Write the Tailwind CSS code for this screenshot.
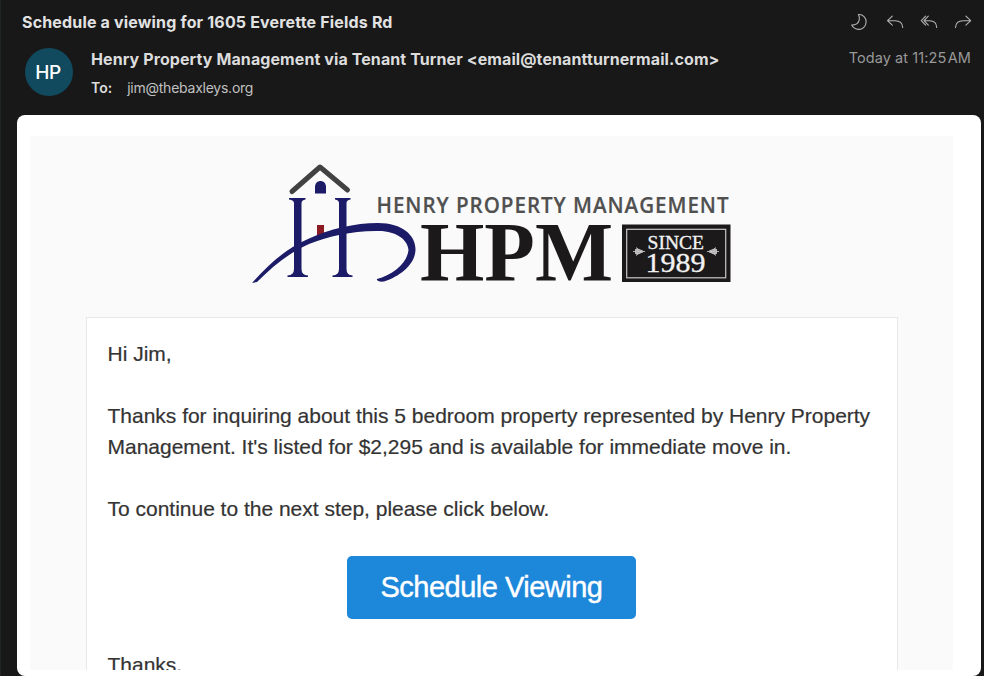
<!DOCTYPE html>
<html lang="en">
<head>
<meta charset="utf-8">
<title>Schedule a viewing for 1605 Everette Fields Rd</title>
<script src="https://cdn.jsdelivr.net/npm/@tailwindcss/browser@4"></script>
</head>
<body class="h-[676px] w-[984px] overflow-hidden bg-[#181818] font-['Inter',sans-serif]">
<div class="flex h-full flex-col border-l border-[#202527] pl-4 pr-[3px]">
  <header class="flex h-[115px] shrink-0 flex-col pl-[5px] pr-[10px]">
    <div class="flex h-[44px] items-center justify-between">
      <h1 class="whitespace-nowrap text-[16px] leading-5 font-bold tracking-[0.17px] text-[#e2e2e2]">Schedule a viewing for 1605 Everette Fields Rd</h1>
      <div class="-mr-px flex items-center gap-[16px] text-[#b4b4b4]">
        <svg class="-ml-px mr-px h-[18px] w-[18px]" viewBox="0 0 18 18" fill="none" stroke="currentColor" stroke-width="1.1" stroke-linejoin="round"><path d="M7.400 1.600C12 1.100 15.300 4.800 15.100 9C15 13.400 11.600 16.500 7.600 16.400C4.600 16.300 2.100 14.700 0.700 12.100C4.800 12 7.400 10.100 8.100 7.300C8.600 5.300 8.300 3.300 7.400 1.600Z"/></svg>
        <svg class="h-[18px] w-[18px]" viewBox="0 0 18 18" fill="none" stroke="currentColor" stroke-width="1.1" stroke-linecap="round" stroke-linejoin="round"><path d="M6.300 3.200L1.500 7.700L6.300 12.200M1.700 7.700H9C13.900 7.700 16.500 10 16.700 14.500"/></svg>
        <svg class="h-[18px] w-[18px]" viewBox="0 0 18 18" fill="none" stroke="currentColor" stroke-width="1.1" stroke-linecap="round" stroke-linejoin="round"><path d="M5.600 3.200L1.300 7.700L5.600 12.200M8.300 3.200L4 7.700L8.300 12.200M4.200 7.700H9.500C14 7.700 16.500 10 16.700 14.500"/></svg>
        <svg class="h-[18px] w-[18px]" viewBox="0 0 18 18" fill="none" stroke="currentColor" stroke-width="1.1" stroke-linecap="round" stroke-linejoin="round"><path d="M11.900 3.200L16.700 7.700L11.900 12.200M16.500 7.700H9.200C4.300 7.700 1.700 10 1.500 14.500"/></svg>
      </div>
    </div>
    <div class="flex pl-[3px]">
      <div class="mt-1 flex h-12 w-12 items-center justify-center rounded-full bg-[#114a5e] pt-[3px] pr-[2px] text-[19px] font-medium tracking-[-0.5px] text-white">HP</div>
      <div class="ml-[18px] flex-1 pt-[5px]">
        <div class="flex justify-between whitespace-nowrap">
          <p class="text-[16px] leading-5 font-bold tracking-[0.095px] text-[#dcdcdc]">Henry Property Management via Tenant Turner &lt;email@tenantturnermail.com&gt;</p>
          <p class="-mt-px text-[14.500px] leading-5 tracking-[0.08px] text-[#989898]">Today at 11:25&#8202;AM</p>
        </div>
        <p class="mt-[9px] flex gap-[15px] text-[14px] leading-5 text-[#c0c0c0]"><span class="font-semibold text-[#dcdcdc]">To:</span><span class="tracking-[-0.24px]">jim@thebaxleys.org</span></p>
      </div>
    </div>
  </header>
  <main class="flex-1 overflow-hidden rounded-[8px] bg-white pt-[21px] pr-7 pb-[6px] pl-[13px]">
    <div class="h-[534px] overflow-hidden bg-[#fafafa] px-14 pt-6 font-['Liberation_Sans',sans-serif]">
      <svg class="ml-[164px] block h-[130px] w-[484px]" viewBox="250 160 484 130" role="img" aria-label="Henry Property Management">
        <path d="M292 191.500L320 167L347.500 190" fill="none" stroke="#424242" stroke-width="5" stroke-linecap="round" stroke-linejoin="round"/>
        <path d="M315 193.500V187C315 179 326 179 326 187V193.500Z" fill="#1b1b68"/>
        <path d="M317 225H324V235L317 239Z" fill="#8c1a22"/>
        <g fill="#1b1b68">
          <path d="M289 198H305.500V199.500Q301.500 200 301.500 203V269Q301.500 275 308 275.500V277H287.500V275.500Q294 275 294 269V203Q294 200 289 199.500Z"/>
          <path d="M335 198H350.500V199.500Q346.500 200 346.500 203V269Q346.500 275 352.500 275.500V277H332.500V275.500Q339 275 339 269V203Q339 200 335 199.500Z"/>
          <path d="M252 283C270 263 287 248 308 239C329 229 355 223 378 223C403 223 416 236 415.500 250C415 264 401 276 384 281.500C380 282 376 281 377 279C392 275 407 264 408.500 250C408 240 396 230 376 231C350 231.500 329 236 309 244C289 253 274 265 257 282Z"/>
        </g>
        <text x="376.500" y="213.300" font-family="Open Sans, sans-serif" font-size="21.500" font-weight="600" fill="#505050" stroke="#505050" stroke-width="0.200" textLength="353" lengthAdjust="spacingAndGlyphs" letter-spacing="1">HENRY PROPERTY MANAGEMENT</text>
        <text x="420" y="280.500" font-family="Liberation Serif, serif" font-size="84" font-weight="700" fill="#1c191a" textLength="193" lengthAdjust="spacingAndGlyphs">HPM</text>
        <rect x="622" y="224.500" width="108.500" height="57.500" fill="#1c191a"/>
        <rect x="626.700" y="229.300" width="99" height="48.500" fill="none" stroke="#c8c8c8" stroke-width="1.200"/>
        <g fill="#f2f2f2" stroke="#f2f2f2" stroke-width="0.300" font-family="Liberation Serif, serif">
          <text x="647.500" y="249" font-size="18.500" textLength="56.500" lengthAdjust="spacingAndGlyphs">SINCE</text>
          <text x="645.500" y="271.500" font-size="27" textLength="60" lengthAdjust="spacingAndGlyphs">1989</text>
        </g>
        <g fill="#b4b4b4" stroke="#c4c4c4" stroke-width="0.900">
          <path d="M633 251.500H645M636 247.500Q637 250 643 251M643 252Q637 253 636 255.500M635 249.500Q640 248.500 642 251.500Q640 254.500 635 253.500"/>
          <path d="M707 251.500H719M716 247.500Q715 250 709 251M709 252Q715 253 716 255.500M717 249.500Q712 248.500 710 251.500Q712 254.500 717 253.500"/>
        </g>
      </svg>
      <div class="mt-[27px] h-[400px] w-[812px] border border-[#e8e8e8] bg-white pt-[20px] pl-[20.500px] text-[21px] leading-[31px] tracking-[-0.01px] text-[#333333] [-webkit-text-stroke:0.2px_#333333]">
        <p>Hi Jim,</p>
        <p class="mt-[31px] whitespace-nowrap">Thanks for inquiring about this 5 bedroom property represented by Henry Property<br>Management. It's listed for $2,295 and is available for immediate move in.</p>
        <p class="mt-[31px]">To continue to the next step, please click below.</p>
        <a class="mt-[32px] ml-[239.500px] flex h-[63px] w-[289px] items-center justify-center rounded-[5px] bg-[#1d87da] text-[29px] tracking-[-0.5px] text-white [-webkit-text-stroke:0.400px_white]">Schedule Viewing</a>
        <p class="mt-[30px]">Thanks,</p>
      </div>
    </div>
  </main>
</div>
</body>
</html>
